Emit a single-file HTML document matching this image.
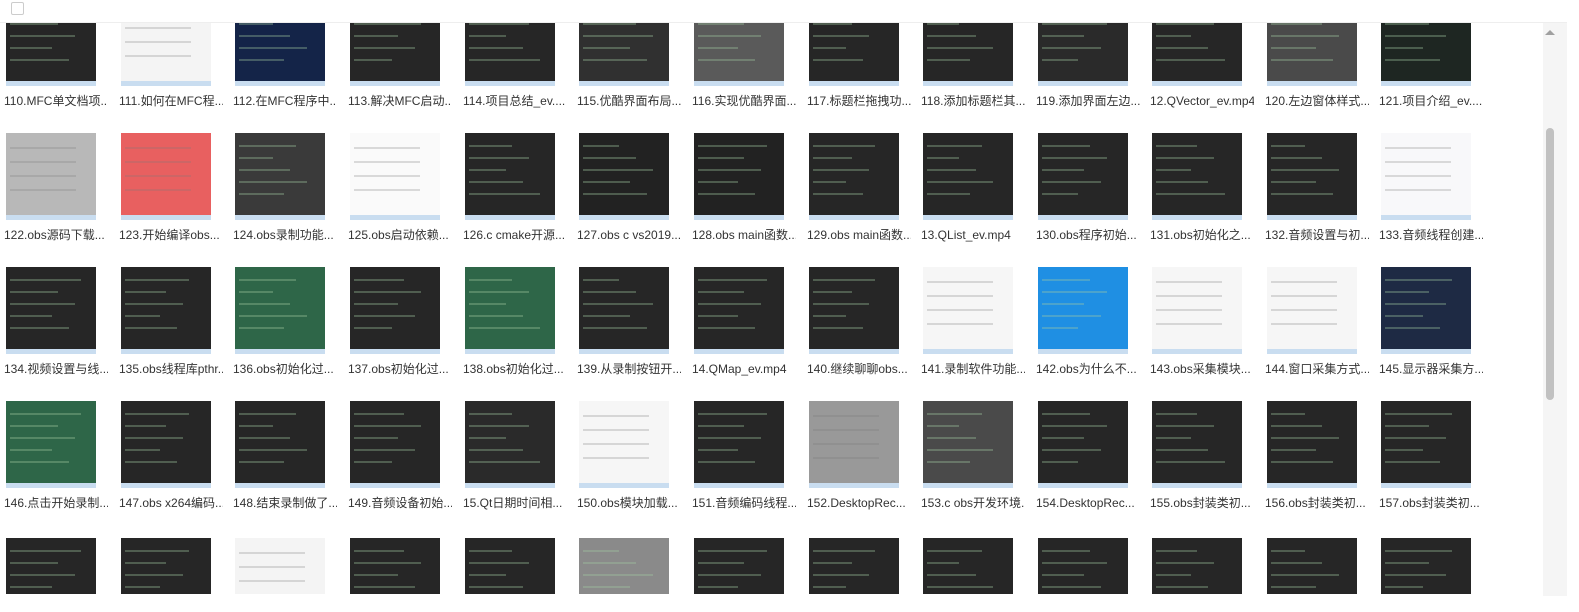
<!DOCTYPE html>
<html><head><meta charset="utf-8"><style>
body{margin:0;width:1579px;height:612px;overflow:hidden;background:#fff;font-family:"Liberation Sans","Noto Sans CJK SC",sans-serif;position:relative}
.hdr{position:absolute;left:0;top:0;width:1567px;height:22px;background:#fff;border-bottom:1px solid #eee;z-index:5}
.cb{position:absolute;left:11px;top:2px;width:11px;height:11px;border:1px solid #ccc;border-radius:2px}
.t{position:absolute;width:90px;height:87px;overflow:hidden}
.t i{position:absolute;left:0;right:0;bottom:0;height:5px;background:#c9ddf0}
.t b{position:absolute;left:4px;right:20px;height:2px;background:rgba(160,200,160,.35)}
.l{position:absolute;width:104px;font-size:12px;color:#333;white-space:nowrap;overflow:hidden;line-height:16px}
.sb{position:absolute;left:1543px;top:22px;width:24px;height:574px;background:#f5f5f5}
.th{position:absolute;left:1546px;top:128px;width:8px;height:272px;background:#c1c1c1;border-radius:4px}
.ar{position:absolute;left:1545px;top:30px;width:0;height:0;border-left:5px solid transparent;border-right:5px solid transparent;border-bottom:5px solid #a0a0a0}
</style></head><body>
<div class="hdr"><div class="cb"></div></div>
<div class="sb"></div><div class="th"></div><div class="ar" style="z-index:6"></div>
<div id="g"></div>
<script>
var xs=[6,121,235,350,465,579,694,809,923,1038,1152,1267,1381];
var tops=[-1,133,267,401,538];
var labels=[
["110.MFC单文档项...","111.如何在MFC程...","112.在MFC程序中...","113.解决MFC启动...","114.项目总结_ev....","115.优酷界面布局...","116.实现优酷界面...","117.标题栏拖拽功...","118.添加标题栏其...","119.添加界面左边...","12.QVector_ev.mp4","120.左边窗体样式...","121.项目介绍_ev...."],
["122.obs源码下载...","123.开始编译obs...","124.obs录制功能...","125.obs启动依赖...","126.c cmake开源...","127.obs c vs2019...","128.obs main函数...","129.obs main函数...","13.QList_ev.mp4","130.obs程序初始...","131.obs初始化之...","132.音频设置与初...","133.音频线程创建..."],
["134.视频设置与线...","135.obs线程库pthr...","136.obs初始化过...","137.obs初始化过...","138.obs初始化过...","139.从录制按钮开...","14.QMap_ev.mp4","140.继续聊聊obs...","141.录制软件功能...","142.obs为什么不...","143.obs采集模块...","144.窗口采集方式...","145.显示器采集方..."],
["146.点击开始录制...","147.obs x264编码...","148.结束录制做了...","149.音频设备初始...","15.Qt日期时间相...","150.obs模块加载...","151.音频编码线程...","152.DesktopRec...","153.c obs开发环境...","154.DesktopRec...","155.obs封装类初...","156.obs封装类初...","157.obs封装类初..."],
["","","","","","","","","","","","",""]];
var D="#262626";
var cols=[
[D,"#f4f4f4","#142448",D,D,"#303030","#5a5a5a",D,D,"#2a2a2a",D,"#4a4a4a","#1e2622"],
["#b8b8b8","#e86060","#3a3a3a","#fafafa",D,"#222","#222",D,D,D,D,D,"#f8f8fa"],
[D,D,"#2e6648",D,"#2e6648",D,D,D,"#f6f6f6","#1f8fe3","#f6f6f6","#f6f6f6","#1e2a44"],
["#2e6648",D,D,D,"#2a2a2a","#f6f6f6",D,"#999","#4a4a4a",D,D,D,D],
[D,D,"#f4f4f4",D,D,"#8a8a8a",D,D,D,D,D,D,D]];
var h="";
for(var r=0;r<5;r++)for(var c=0;c<13;c++){
 var x=xs[c],y=tops[r],col=cols[r][c];
 var light=/#f|#e|#b|#9/.test(col);
 var hh=r==4?56:87;
 h+='<div class="t" style="left:'+x+'px;top:'+y+'px;height:'+hh+'px;background:'+col+'">';
 if(!light){for(var k=0;k<5;k++)h+='<b style="top:'+(12+k*12)+'px;right:'+(15+((k*23+c*7)%40))+'px"></b>';}
 else{for(var k=0;k<4;k++)h+='<b style="top:'+(14+k*14)+'px;background:rgba(120,120,120,.25)"></b>';}
 if(r<4)h+='<i></i>';
 h+='</div>';
 if(labels[r][c])h+='<div class="l" style="left:'+(x-2)+'px;top:'+(y+94)+'px">'+labels[r][c]+'</div>';
}
document.getElementById("g").innerHTML=h;
</script>
</body></html>
